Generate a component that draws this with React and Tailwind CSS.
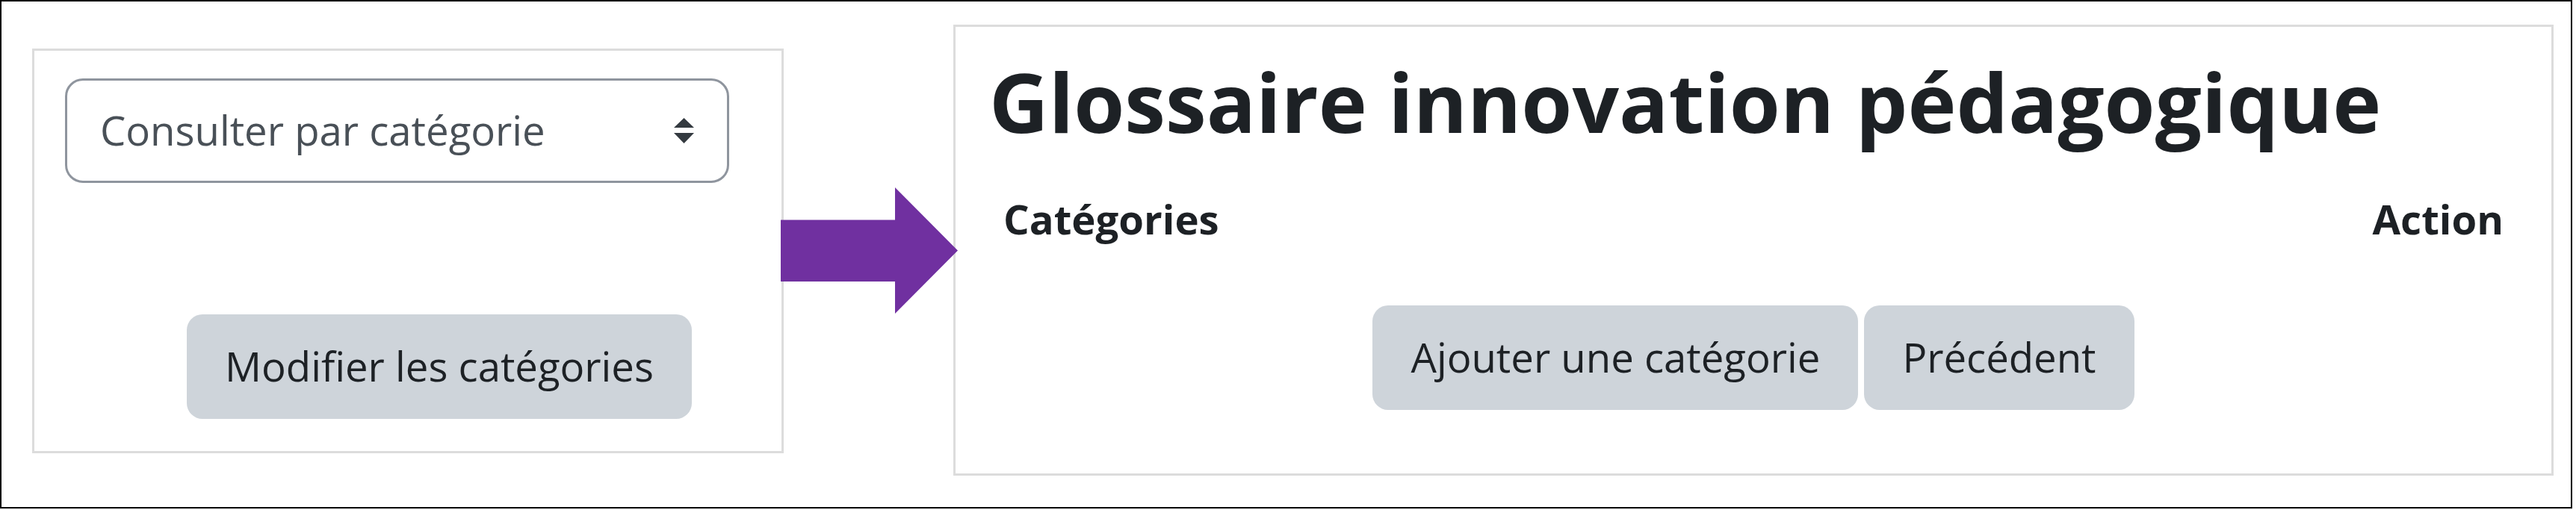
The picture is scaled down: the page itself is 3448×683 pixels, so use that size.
import React from 'react';

const FONT = { fontFamily: '"Open Sans", "Noto Sans", sans-serif' };

function SortIcon() {
  return (
    <svg width="27" height="34" viewBox="0 0 27 34" className="shrink-0">
      <polygon points="13.5,0 27,13 0,13" fill="#343a40" />
      <polygon points="0,20 27,20 13.5,34" fill="#343a40" />
    </svg>
  );
}

function Arrow() {
  return (
    <svg
      width="237"
      height="169"
      viewBox="0 0 237 169"
      className="absolute left-[1043px] top-[249px]"
    >
      <polygon
        points="0,43.5 153,43.5 153,0 237,84.5 153,169 153,126 0,126"
        fill="#7030a0"
      />
    </svg>
  );
}

function GreyButton({ children, className = '' }) {
  return (
    <button
      type="button"
      className={`rounded-[21px] bg-[#ced4da] px-[51px] py-[29px] text-[54.5px] leading-[1.5] text-[#1d2125] whitespace-nowrap ${className}`}
    >
      {children}
    </button>
  );
}

export default function App() {
  return (
    <div className="h-[683px] w-[3448px] bg-white" style={FONT}>
      <div className="relative flex h-[681px] w-[3443px] items-start border-2 border-black">
        {/* left panel: category select */}
        <div className="ml-[41px] mt-[63px] flex h-[542px] w-[1006px] shrink-0 flex-col border-[3px] border-[#dcdcdc] px-[41px] pt-[37px]">
          <div className="flex h-[140px] w-[889px] items-center justify-between rounded-[24px] border-[3px] border-[#8f959e] pl-[44px] pr-[44px]">
            <span className="text-[54.5px] leading-[1.5] text-[#495057]">Consulter par catégorie</span>
            <SortIcon />
          </div>
          <div className="ml-[163px] mt-[176px] flex">
            <GreyButton>Modifier les catégories</GreyButton>
          </div>
        </div>

        <Arrow />

        {/* right panel: glossary categories */}
        <div className="ml-[227px] mt-[31px] h-[604px] w-[2142px] shrink-0 border-[3px] border-[#dcdcdc] px-[45px] pt-[33px] text-[#1d2125]">
          <h2 className="text-[110px] font-bold leading-[1.2]">Glossaire innovation pédagogique</h2>
          <div className="mt-[32px] flex justify-between px-[19px] py-[20px] text-[54.5px] font-bold leading-[1.5]">
            <span>Catégories</span>
            <span>Action</span>
          </div>
          <div className="mt-[54px] flex justify-center gap-[8px]">
            <GreyButton>Ajouter une catégorie</GreyButton>
            <GreyButton>Précédent</GreyButton>
          </div>
        </div>
      </div>
    </div>
  );
}
